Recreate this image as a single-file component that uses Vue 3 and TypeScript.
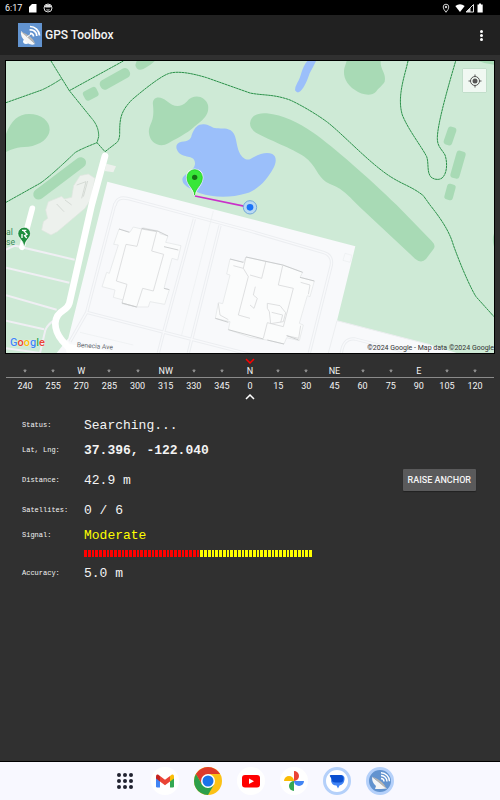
<script setup lang="ts">
interface Tick {
  degrees: number
  point: string
}

const points: Record<number, string> = { 0: 'N', 45: 'NE', 90: 'E', 270: 'W', 315: 'NW' }

const ticks: Tick[] = Array.from({ length: 17 }, (_, i) => {
  const degrees = (240 + i * 15) % 360
  return { degrees, point: points[degrees] ?? '' }
})

const segments = Array.from({ length: 61 }, (_, i) => (i < 31 ? 'weak' : 'fair'))

const footpaths: string[] = [
  'M153 18L185 70L208 107L275 190Q297 215 296 245L291 263L315 290',
  'M18 143L125 105Q150 94 185 71',
  'M208 107L370 18',
  'M18 442L120 385Q150 365 225 293Q240 283 291 263',
  'M315 290L350 263Q359 255 359 235C359 190 362 170 395 135C430 105 480 65 505 56C530 47 570 53 620 68L750 114C790 122 820 117 870 135C910 153 960 185 980 200C1020 230 1090 305 1150 350C1200 388 1230 390 1270 422L1290 450C1330 500 1350 535 1360 570C1385 640 1415 705 1428 725L1482 785',
  'M1224 18C1215 60 1190 125 1207 180C1225 225 1265 275 1280 305C1287 325 1280 350 1292 365C1300 375 1322 377 1330 365C1342 350 1342 320 1335 300C1325 282 1312 275 1312 250C1312 210 1340 110 1367 18',
]

const groves: string[] = [
  'M18 237C35 195 55 177 87 177C125 177 150 200 149 224C148 250 120 270 85 275C50 276 35 282 18 291Z',
  'M459 150C455 125 480 120 500 138C520 155 540 160 560 140C580 115 615 122 624 150C630 185 600 200 575 222C545 245 525 252 505 265C480 280 450 265 447 235C445 205 465 205 459 150Z',
  'M1040 18H1142C1140 45 1160 55 1154 80C1145 95 1135 98 1128 110C1115 125 1085 120 1065 105C1040 90 1028 65 1033 40Z',
  'M750 205C753 180 775 173 800 175C850 180 895 203 940 233C1000 275 1110 372 1190 450L1295 558Q1310 573 1299 584L1278 612Q1264 627 1245 611L1080 457C1035 410 1020 398 990 387C955 372 955 345 925 315C900 290 830 265 775 237Q750 225 750 205Z',
  'M1435 18H1482V29Q1455 27 1435 18Z',
  'M1482 535Q1475 555 1482 575Z',
]
</script>

<template>
  <div class="screen">
    <div class="system-bar">
      <span class="clock">6:17</span>
      <svg class="sys" viewBox="0 0 10 10"><path d="M4 1h4.500v8.500H1V4z" fill="#fff" /></svg>
      <svg class="sys face" viewBox="0 0 10 10">
        <circle cx="5" cy="5" r="4" fill="none" stroke="#ddd" />
        <path d="M1.500 3Q5 0 8.500 3L7.500 4.500H2.500ZM3 6.500h4L6.200 7.500H3.800Z" fill="#ddd" />
      </svg>
      <span class="spacer"></span>
      <svg class="sys" viewBox="0 0 10 10">
        <path d="M5 9.300Q2.200 6 2.200 4a2.800 2.800 0 0 1 5.600 0Q7.800 6 5 9.300Z" fill="none" stroke="#ccc" />
        <circle cx="5" cy="4" r="1.200" fill="#ccc" />
      </svg>
      <svg class="sys wifi" viewBox="0 0 10 10"><path d="M.3 3Q5-.7 9.700 3L5 9Z" fill="#fff" /></svg>
      <svg class="sys" viewBox="0 0 10 10">
        <path d="M8.500 1.500V9H1Z" fill="none" stroke="#ddd" /><path d="M5.500 4.500V9H1Z" fill="#ddd" />
      </svg>
      <svg class="sys" viewBox="0 0 10 10"><path d="M2.500 1.500H4V.5h2v1h1.700V9.500H2.500Z" fill="#fff" /></svg>
    </div>

    <header class="app-bar">
      <svg class="logo" viewBox="0 0 24 24">
        <rect width="24" height="24" fill="#6293cf" />
        <path d="M5 18l3-4 4 4q-1 3-4 3-3 0-3-3Z" fill="#fff" />
        <path d="M3 8Q2 14 8 19Q13 23 17 21Z" fill="#f6f6f6" />
        <path d="M2.500 8.500L17.500 21.200Q15 13 2.500 8.500Z" fill="#b8b5b0" />
        <path d="M9 14L13 11" stroke="#fff" />
        <path d="M12 10.500a3 3 0 0 1 3.500 3M11.500 7a6 6 0 0 1 7.300 6M12 3.500a9.500 9.500 0 0 1 9.500 9" fill="none" stroke="#fff" stroke-width="1.700" />
      </svg>
      <h1>GPS Toolbox</h1>
      <button class="more" type="button" aria-label="More options">
        <i></i><i></i><i></i>
      </button>
    </header>

    <section class="map">
      <svg class="terrain" viewBox="18 18 1464 876" preserveAspectRatio="xMidYMid slice">
        <rect x="18" y="18" width="1464" height="876" fill="#ceead6" />

        <g fill="#a8dab5">
          <path v-for="(d, i) in groves" :key="i" :d="d" />
          <rect x="250" y="101" width="44" height="31" rx="9" transform="rotate(-27 272 116)" />
          <rect x="296" y="56" width="98" height="31" rx="13" transform="rotate(-29 345 72)" />
          <path d="M406 30L410 18H464Q455 28 430 42Q410 50 406 30Z" />
          <rect x="84" y="354" width="190" height="32" rx="16" transform="rotate(-37 179 370)" />
          <rect x="1337" y="215" width="26" height="56" rx="9" transform="rotate(19 1350 243)" />
          <rect x="1360" y="287" width="28" height="84" rx="9" transform="rotate(16 1374 329)" />
          <rect x="1337" y="387" width="26" height="48" rx="8" transform="rotate(15 1350 411)" />
        </g>

        <g fill="#9bbffa">
          <path d="M575 240C585 215 595 207 612 208C630 209 635 220 650 220C670 221 680 218 692 226C710 240 707 260 715 285C722 305 735 317 750 313C775 296 800 290 817 297C830 305 830 320 820 340C800 375 780 400 740 415C690 430 640 428 600 415C565 400 547 390 547 373C550 355 585 350 585 325C585 300 555 310 538 295C525 280 525 265 545 260C562 259 573 255 575 240Z" />
          <path d="M922 18H948Q940 35 929 55C922 75 915 95 901 109Q892 117 885 106Q885 95 892 83C905 65 903 40 922 18Z" />
        </g>

        <g fill="none" stroke="#2a9149" stroke-width="3" stroke-dasharray="8 1">
          <path v-for="(d, i) in footpaths" :key="i" :d="d" />
        </g>

        <path d="M322 380L750 491L1066 574L1011 797L1290 869L1370 894H170L205 850Z" fill="#f8f9fb" />
        <path d="M1011 797L985 894M1011 797L1290 869" fill="none" stroke="#eceef0" stroke-width="3" />

        <g fill="none" stroke="#eceef1" stroke-width="10" stroke-linejoin="round">
          <path d="M345 445L260 772L210 860M345 452Q350 422 385 431L750 528L970 592Q998 600 994 630L928 894" />
          <path d="M583 492L490 835L475 894M660 512L565 894M260 772L750 898M1024 894Q1030 848 1065 852L1230 894" />
        </g>
        <g fill="none" stroke="#f8f9fb" stroke-width="4" stroke-linejoin="round">
          <path d="M345 445L260 772L210 860M345 452Q350 422 385 431L750 528L970 592Q998 600 994 630L928 894" />
          <path d="M583 492L490 835L475 894M660 512L565 894M260 772L750 898M1024 894Q1030 848 1065 852L1230 894" />
        </g>
        <path d="M640 468L545 840M240 832L400 870M1035 595L1056 601L1050 622L1029 616Z" fill="none" stroke="#eceef0" stroke-width="2" />

        <g fill="#fbfcfc" stroke="#d8dadb" stroke-width="2.500">
          <path d="M357 522L390 531L400 516L425 522L428 518L475 528L480 536L504 543L497 562L543 572L533 615L516 610L492 700L508 704L494 748L450 740L445 756H417L410 756L366 746L370 735L340 727L345 705L306 695L320 652L328 655L355 570L341 568Z" stroke="#e6e8e9" />
          <path d="M425 522L411 574L378 568L349 678L381 688L366 744L410 756L428 700L460 708L491 598L455 588L470 530Z" />
          <path d="M357 522L388 532M425 520L475 529L504 543M492 575L535 585M366 744L410 756M492 700L508 704" fill="none" stroke="#c4c6c8" />
          <path d="M690 612L730 622L738 606L800 620L850 630L908 652L900 667L943 678L930 725L922 722L898 805L910 810L898 857L860 848L852 867L800 855L750 847L685 824L690 800L646 790L655 743L668 746L690 660L680 657Z" stroke="#e6e8e9" />
          <path d="M738 606L730 640L700 632M730 640L745 665L715 780L750 790M798 618L785 670L750 660M848 632L835 690L880 700L850 815L802 803L790 850M902 682L930 690L925 718M766 695L760 720L772 730L762 760L750 750M802 745L840 752L857 773L850 800L812 806L808 770L802 760ZM815 772L848 780L842 802M860 842L896 850L902 812M655 745L660 780L685 794" fill="none" />
          <path d="M690 612L730 622M738 606L848 630L908 652M900 667L943 678M646 790L685 802M685 824L790 852M802 855L852 867M860 842L896 855" fill="none" stroke="#c4c6c8" />
        </g>

        <g fill="#edf1ed" stroke="#e0e5e0" stroke-width="2">
          <path d="M265 357L285 370L273 432L255 460L172 530L153 540L125 525L130 500L143 490L137 465L145 440L185 424L193 432L215 427L221 392L240 362Z" />
          <path d="M230 390L258 380L245 430M263 378L250 425M195 435L215 450M170 447L192 470" fill="none" stroke="#c9cec9" />
          <path d="M319 326L348 334L340 352L314 348Z" stroke="none" />
        </g>

        <g fill="none" stroke="#f0eff4" stroke-width="6">
          <path d="M18 584L45 572L224 614M18 638L208 683M18 721L170 764M18 797L132 823M18 880L120 894M120 894L136 825Q145 805 165 795" />
        </g>
        <g fill="none" stroke="#fff" stroke-linecap="round">
          <path d="M97 460L66 577" stroke-width="17" />
          <path d="M315 303L275 450L208 745Q204 758 190 766C160 783 158 820 185 855L215 888" stroke-width="20" />
          <path d="M215 885L320 905" stroke-width="34" />
        </g>

        <g class="place">
          <text x="18" y="539">al</text>
          <text x="18" y="570">se</text>
        </g>
        <path d="M73 576Q70 560 59 549A19 19 0 1 1 86 549Q75 560 73 576Z" fill="#1e8e3e" stroke="#fff" stroke-width="2" />
        <path d="M66 526H79M70 526L81 538L74 542L80 549M66 537V549" fill="none" stroke="#fff" stroke-width="4" />
        <text class="road" x="230" y="876" transform="rotate(4 230 876)">Benecia Ave</text>

        <path d="M585 423L750 457" stroke="#c931c9" stroke-width="5" />
        <circle cx="750" cy="457" r="20" fill="#b9d9f2" stroke="#74a9d8" stroke-width="3" />
        <circle cx="750" cy="457" r="10" fill="#1a73f8" />
        <path d="M584 420C583 400 561 391 561 367A23 23 0 0 1 607 367C607 391 585 400 584 420Z" fill="#38e738" stroke="#fff" stroke-width="7" stroke-opacity=".75" />
        <path d="M584 420C583 400 561 391 561 367A23 23 0 0 1 607 367C607 391 585 400 584 420Z" fill="#38e738" stroke="#12c912" stroke-width="2" />
        <circle cx="584" cy="367" r="8" fill="#157015" />
      </svg>

      <button class="locate" type="button" aria-label="My location">
        <svg viewBox="0 0 14 14">
          <circle cx="7" cy="7" r="4.500" fill="none" stroke="#555" />
          <circle cx="7" cy="7" r="2.500" fill="#555" />
          <path d="M7 .5V3M7 11v2.500M.5 7H3M11 7h2.500" stroke="#555" />
        </svg>
      </button>
      <div class="brand"><b class="bl">G</b><b class="rd">o</b><b class="yl">o</b><b class="bl">g</b><b class="gr">l</b><b class="rd">e</b></div>
      <div class="credit">©2024 Google - Map data ©2024 Google</div>
    </section>

    <section class="compass">
      <svg class="chevron" viewBox="0 0 10 6"><path d="M1 1L5 5L9 1" fill="none" stroke="#f00" stroke-width="1.500" /></svg>
      <div class="scale points">
        <span v-for="t in ticks" :key="t.degrees">
          <template v-if="t.point">{{ t.point }}</template>
          <svg v-else class="minor" viewBox="0 0 4 4"><path d="M.8 1h2.400L2 3.200Z" fill="#666" stroke="#aaa" stroke-width=".7" /></svg>
        </span>
      </div>
      <div class="scale degrees">
        <span v-for="t in ticks" :key="t.degrees">{{ t.degrees }}</span>
      </div>
      <svg class="chevron lower" viewBox="0 0 10 6"><path d="M1 5L5 1L9 5" fill="none" stroke="#fff" stroke-width="1.500" /></svg>
    </section>

    <dl class="readings">
      <div class="row"><dt>Status:</dt><dd>Searching...</dd></div>
      <div class="row mid"><dt>Lat, Lng:</dt><dd class="strong">37.396, -122.040</dd></div>
      <div class="row tall">
        <dt>Distance:</dt><dd>42.9 m</dd>
        <button class="anchor" type="button">RAISE ANCHOR</button>
      </div>
      <div class="row mid"><dt>Satellites:</dt><dd>0 / 6</dd></div>
      <div class="row"><dt>Signal:</dt><dd class="moderate">Moderate</dd></div>
      <div class="meter" role="img" aria-label="Signal strength">
        <i v-for="(s, i) in segments" :key="i" :class="s"></i>
      </div>
      <div class="row mid"><dt>Accuracy:</dt><dd>5.0 m</dd></div>
    </dl>

    <nav class="dock">
      <button type="button" aria-label="All apps">
        <svg class="apps" viewBox="3 3 22 22" fill="#202230">
          <template v-for="y in [8, 14, 20]" :key="y">
            <circle v-for="x in [8, 14, 20]" :key="x" :cx="x" :cy="y" r="2" />
          </template>
        </svg>
      </button>
      <button type="button" aria-label="Gmail">
        <svg viewBox="0 0 28 28">
          <circle cx="14" cy="14" r="14" fill="#fff" />
          <path d="M5 9.500L9 12V20.500H6.200Q5 20.500 5 19.200Z" fill="#4285f4" />
          <path d="M19 12L23 9.500V19.200Q23 20.500 21.800 20.500H19Z" fill="#34a853" />
          <path d="M19 9L21 7.600Q23 7 23 9.500V11.500L19 14.500Z" fill="#fbbc04" />
          <path d="M5 11.500V9.500Q5 7 7 7.600L9 9V14.500Z" fill="#c5221f" />
          <path d="M9 9L14 12.800L19 9V14.500L14 18.200L9 14.500Z" fill="#ea4335" />
        </svg>
      </button>
      <button type="button" aria-label="Chrome">
        <svg viewBox="0 0 28 28">
          <circle cx="14" cy="14" r="14" fill="#fbc116" />
          <path d="M1.880 7A14 14 0 0 1 26.120 7H14L8 17.500Z" fill="#dd3a2c" />
          <path d="M1.880 7A14 14 0 0 0 14 28L20 17.500L14 21L8 17.500Z" fill="#2c9f4b" />
          <circle cx="14" cy="14" r="7" fill="#fff" />
          <circle cx="14" cy="14" r="5.500" fill="#1a73e8" />
        </svg>
      </button>
      <button type="button" aria-label="YouTube">
        <svg viewBox="0 0 28 28">
          <circle cx="14" cy="14" r="14" fill="#fff" />
          <rect x="5" y="8" width="18" height="12.500" rx="3" fill="#f00" />
          <path d="M12 11.500V17L17 14.200Z" fill="#fff" />
        </svg>
      </button>
      <button type="button" aria-label="Photos">
        <svg viewBox="0 0 28 28">
          <circle cx="14" cy="14" r="14" fill="#fff" />
          <path d="M14 4a5 5 0 0 1 0 10Z" fill="#ea4335" />
          <path d="M24 14a5 5 0 0 1-10 0Z" fill="#4285f4" />
          <path d="M14 24a5 5 0 0 1 0-10Z" fill="#34a853" />
          <path d="M4 14a5 5 0 0 1 10 0Z" fill="#fbbc04" />
        </svg>
      </button>
      <button type="button" aria-label="Messages">
        <svg viewBox="0 0 28 28">
          <circle cx="14" cy="14" r="12.500" fill="#fff" stroke="#b4d0fa" stroke-width="3" />
          <path d="M11 8H18.500Q22 8.500 21.500 12.500Q21 17.500 16.500 18.500L15 21.500L13.500 18.500Q9 18.500 8 14Z" fill="#3f83f5" />
          <path d="M8 8H18Q20.500 8.500 20.500 11.500Q20.500 15.500 17 15.500H12.500Q8.500 15.500 8 11L6.800 9Q6.500 8 8 8Z" fill="#0a4fd0" />
        </svg>
      </button>
      <button type="button" aria-label="GPS Toolbox">
        <svg viewBox="0 0 28 28">
          <circle cx="14" cy="14" r="12.500" fill="#6293cf" stroke="#b4d0fa" stroke-width="3" />
          <path d="M6 10Q6 16 10 19L9 22H15L21 21.500Z" fill="#f6f6f6" />
          <path d="M6 9.500L20.500 22Q18 14 6 9.500Z" fill="#b8b5b0" />
          <path d="M15 11.500a3 3 0 0 1 3 3M15 8.500a6 6 0 0 1 6 6M15 5.800a8.500 8.500 0 0 1 8.500 8.500" fill="none" stroke="#fff" stroke-width="1.400" />
        </svg>
      </button>
    </nav>
  </div>
</template>

<style>
body {
  margin: 0;
  background: #303030;
}
</style>

<style scoped>
.screen {
  min-height: 100vh;
  display: flex;
  flex-direction: column;
  background: #303030;
  color: #f4f4f4;
  font-family: Roboto, "Liberation Sans", sans-serif;
}
button {
  margin: 0;
  padding: 0;
  border: 0;
  background: none;
  color: inherit;
  font-family: inherit;
}
svg {
  display: block;
}
.system-bar {
  height: 15px;
  padding: 0 15px 0 5px;
  display: flex;
  align-items: center;
  background: #000;
  font-size: 9px;
}
.clock {
  width: 23px;
}
.sys {
  width: 10px;
  height: 10px;
}
.face {
  margin-left: 5px;
}
.spacer {
  flex: 1;
}
.wifi {
  margin-left: 4px;
}
.app-bar {
  height: 40px;
  padding: 0 15px 0 18px;
  display: flex;
  align-items: center;
  gap: 3px;
  background: #212121;
}
.logo {
  width: 24px;
  height: 24px;
}
h1 {
  flex: 1;
  margin: 0;
  font-size: 12px;
  line-height: 16px;
  font-weight: 500;
}
.more {
  width: 8px;
  display: flex;
  flex-direction: column;
  align-items: center;
  gap: 1px;
}
.more i {
  width: 3px;
  height: 3px;
  border-radius: 50%;
  background: #fff;
}
.map {
  position: relative;
  margin: 5px 5px 0;
  border: 1px solid #000;
}
.terrain {
  width: 100%;
  aspect-ratio: 488 / 292;
}
.place {
  font-size: 26px;
  fill: #3b8a5b;
}
.road {
  font-size: 20px;
  fill: #6b6e73;
}
.locate {
  position: absolute;
  top: 8px;
  right: 8px;
  width: 23px;
  height: 23px;
  display: grid;
  place-items: center;
  background: #f0f8f2;
  box-shadow: 0 0 1px #8aa895;
}
.locate svg {
  width: 14px;
  height: 14px;
}
.brand {
  position: absolute;
  left: 4px;
  bottom: 3px;
  font-size: 11px;
  line-height: 14px;
  text-shadow: 0 0 1px #fff;
}
.brand b {
  font-weight: 500;
}
.bl { color: #4285f4; }
.rd { color: #ea4335; }
.yl { color: #fbbc04; }
.gr { color: #34a853; }
.credit {
  position: absolute;
  right: 0;
  bottom: 1px;
  color: #333;
  font-size: 7px;
  line-height: 8px;
}
.compass {
  margin: 0 6px;
  padding-top: 4px;
}
.chevron {
  width: 10px;
  height: 6px;
  margin: 0 auto;
}
.scale {
  padding: 0 5px;
  display: flex;
  font-size: 9px;
  line-height: 12px;
}
.scale span {
  flex: 1;
  display: flex;
  align-items: center;
  justify-content: center;
}
.points {
  height: 12px;
  padding-top: 1px;
  border-bottom: 1px solid #8a8a8a;
}
.minor {
  width: 4px;
  height: 4px;
}
.degrees {
  padding-top: 2px;
}
.lower {
  margin-top: 2px;
}
.readings {
  margin: 13px 24px 0 22px;
  font-family: "Liberation Mono", monospace;
}
.row {
  height: 24px;
  display: flex;
  align-items: center;
}
.mid {
  height: 26px;
}
.tall {
  height: 34px;
}
dt {
  width: 62px;
  font-size: 7px;
}
dd {
  flex: 1;
  margin: 0;
  padding-top: 2px;
  font-size: 13px;
  line-height: 16px;
}
.strong {
  font-weight: 700;
}
.moderate {
  color: #ff0;
}
.anchor {
  height: 22px;
  padding: 0 5px;
  border-radius: 1px;
  background: #5a5a5b;
  box-shadow: 0 1px 1px #222;
  font-family: Roboto, "Liberation Sans", sans-serif;
  font-size: 9px;
  font-weight: 500;
}
.meter {
  width: 229px;
  height: 13px;
  margin-left: 62px;
  display: flex;
  align-items: center;
}
.meter i {
  flex: 1;
  height: 7px;
  border-right: 1px solid #303030;
}
.weak {
  background: #f00;
}
.fair {
  background: #ff0;
}
.dock {
  margin-top: auto;
  height: 38px;
  padding-left: 8px;
  display: flex;
  align-items: center;
  justify-content: center;
  gap: 15px;
  background: #f8f8ff;
  border-top: 1px solid #000;
}
.dock svg {
  width: 28px;
  height: 28px;
}
.dock .apps {
  width: 22px;
  height: 22px;
}
</style>
